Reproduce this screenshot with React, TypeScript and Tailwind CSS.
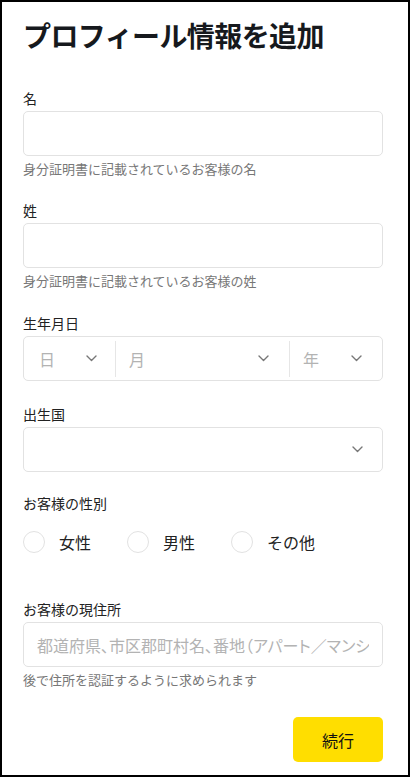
import React from "react"

const font = "font-['Noto_Sans_CJK_JP',sans-serif]"

function Chevron() {
  return (
    <svg width="11" height="7" viewBox="0 0 11 7" fill="none">
      <path d="M1 1l4.5 4.5L10 1" stroke="#777" strokeWidth="1.4" strokeLinecap="round" strokeLinejoin="round" />
    </svg>
  )
}

function Label({ children }: { children: React.ReactNode }) {
  return <div className="text-[14px] leading-[20px] text-[#222]">{children}</div>
}

function Help({ children }: { children: React.ReactNode }) {
  return <div className="mt-[4px] text-[13px] leading-[18px] text-[#777]">{children}</div>
}

function TextField({ label, help, placeholder, className }: { label: string; help: string; placeholder?: string; className?: string }) {
  return (
    <div className={className}>
      <Label>{label}</Label>
      <input
        type="text"
        placeholder={placeholder}
        className={`mt-[3px] block h-[45px] w-full rounded-[5px] border border-[#e2e2e2] bg-white px-[13px] text-[16px] text-[#222] outline-none [font-feature-settings:'palt'] placeholder:text-[#b3b3b3] ${font}`}
      />
      <Help>{help}</Help>
    </div>
  )
}

function Radio({ label }: { label: string }) {
  return (
    <label className="flex items-center gap-[14px]">
      <span className="h-[22px] w-[22px] rounded-full border border-[#e2e2e2] bg-white" />
      <span className="text-[16px] leading-[22px] text-[#222]">{label}</span>
    </label>
  )
}

export default function App() {
  return (
    <div className={`h-[777px] w-[410px] border-2 border-black bg-white pl-[21px] pr-[25px] pt-[15px] ${font}`}>
      {/* Title */}
      <h1 className="text-[28px] font-bold leading-[36px] tracking-[-0.6px] text-[#16191d]">プロフィール情報を追加</h1>

      {/* Names */}
      <TextField className="mt-[35px]" label="名" help="身分証明書に記載されているお客様の名" />
      <TextField className="mt-[22px]" label="姓" help="身分証明書に記載されているお客様の姓" />

      {/* Date of birth */}
      <div className="mt-[23px]">
        <Label>生年月日</Label>
        <div className="mt-[3px] flex h-[45px] items-center rounded-[5px] border border-[#e2e2e2]">
          <div className="flex w-[91px] items-center justify-between pl-[15px] pr-[18px]">
            <span className="text-[16px] text-[#b3b3b3]">日</span>
            <Chevron />
          </div>
          <div className="h-[36px] w-px bg-[#e6e6e6]" />
          <div className="flex flex-1 items-center justify-between pl-[13px] pr-[20px]">
            <span className="text-[16px] text-[#b3b3b3]">月</span>
            <Chevron />
          </div>
          <div className="h-[36px] w-px bg-[#e6e6e6]" />
          <div className="flex w-[92px] items-center justify-between pl-[13px] pr-[20px]">
            <span className="text-[16px] text-[#b3b3b3]">年</span>
            <Chevron />
          </div>
        </div>
      </div>

      {/* Country of birth */}
      <div className="mt-[23px]">
        <Label>出生国</Label>
        <div className="mt-[3px] flex h-[45px] items-center justify-end rounded-[5px] border border-[#e2e2e2] pr-[19px]">
          <Chevron />
        </div>
      </div>

      {/* Gender */}
      <div className="mt-[21px]">
        <Label>お客様の性別</Label>
        <div className="mt-[18px] flex gap-[36px]">
          <Radio label="女性" />
          <Radio label="男性" />
          <Radio label="その他" />
        </div>
      </div>

      {/* Address */}
      <TextField
        className="mt-[46px]"
        label="お客様の現住所"
        placeholder="都道府県、市区郡町村名、番地（アパート／マンション名、部屋番号）"
        help="後で住所を認証するように求められます"
      />

      <div className="mt-[28px] flex justify-end">
        <button className="h-[45px] w-[90px] rounded-[5px] bg-[#ffde00] text-[16px] text-[#111]">続行</button>
      </div>
    </div>
  )
}
